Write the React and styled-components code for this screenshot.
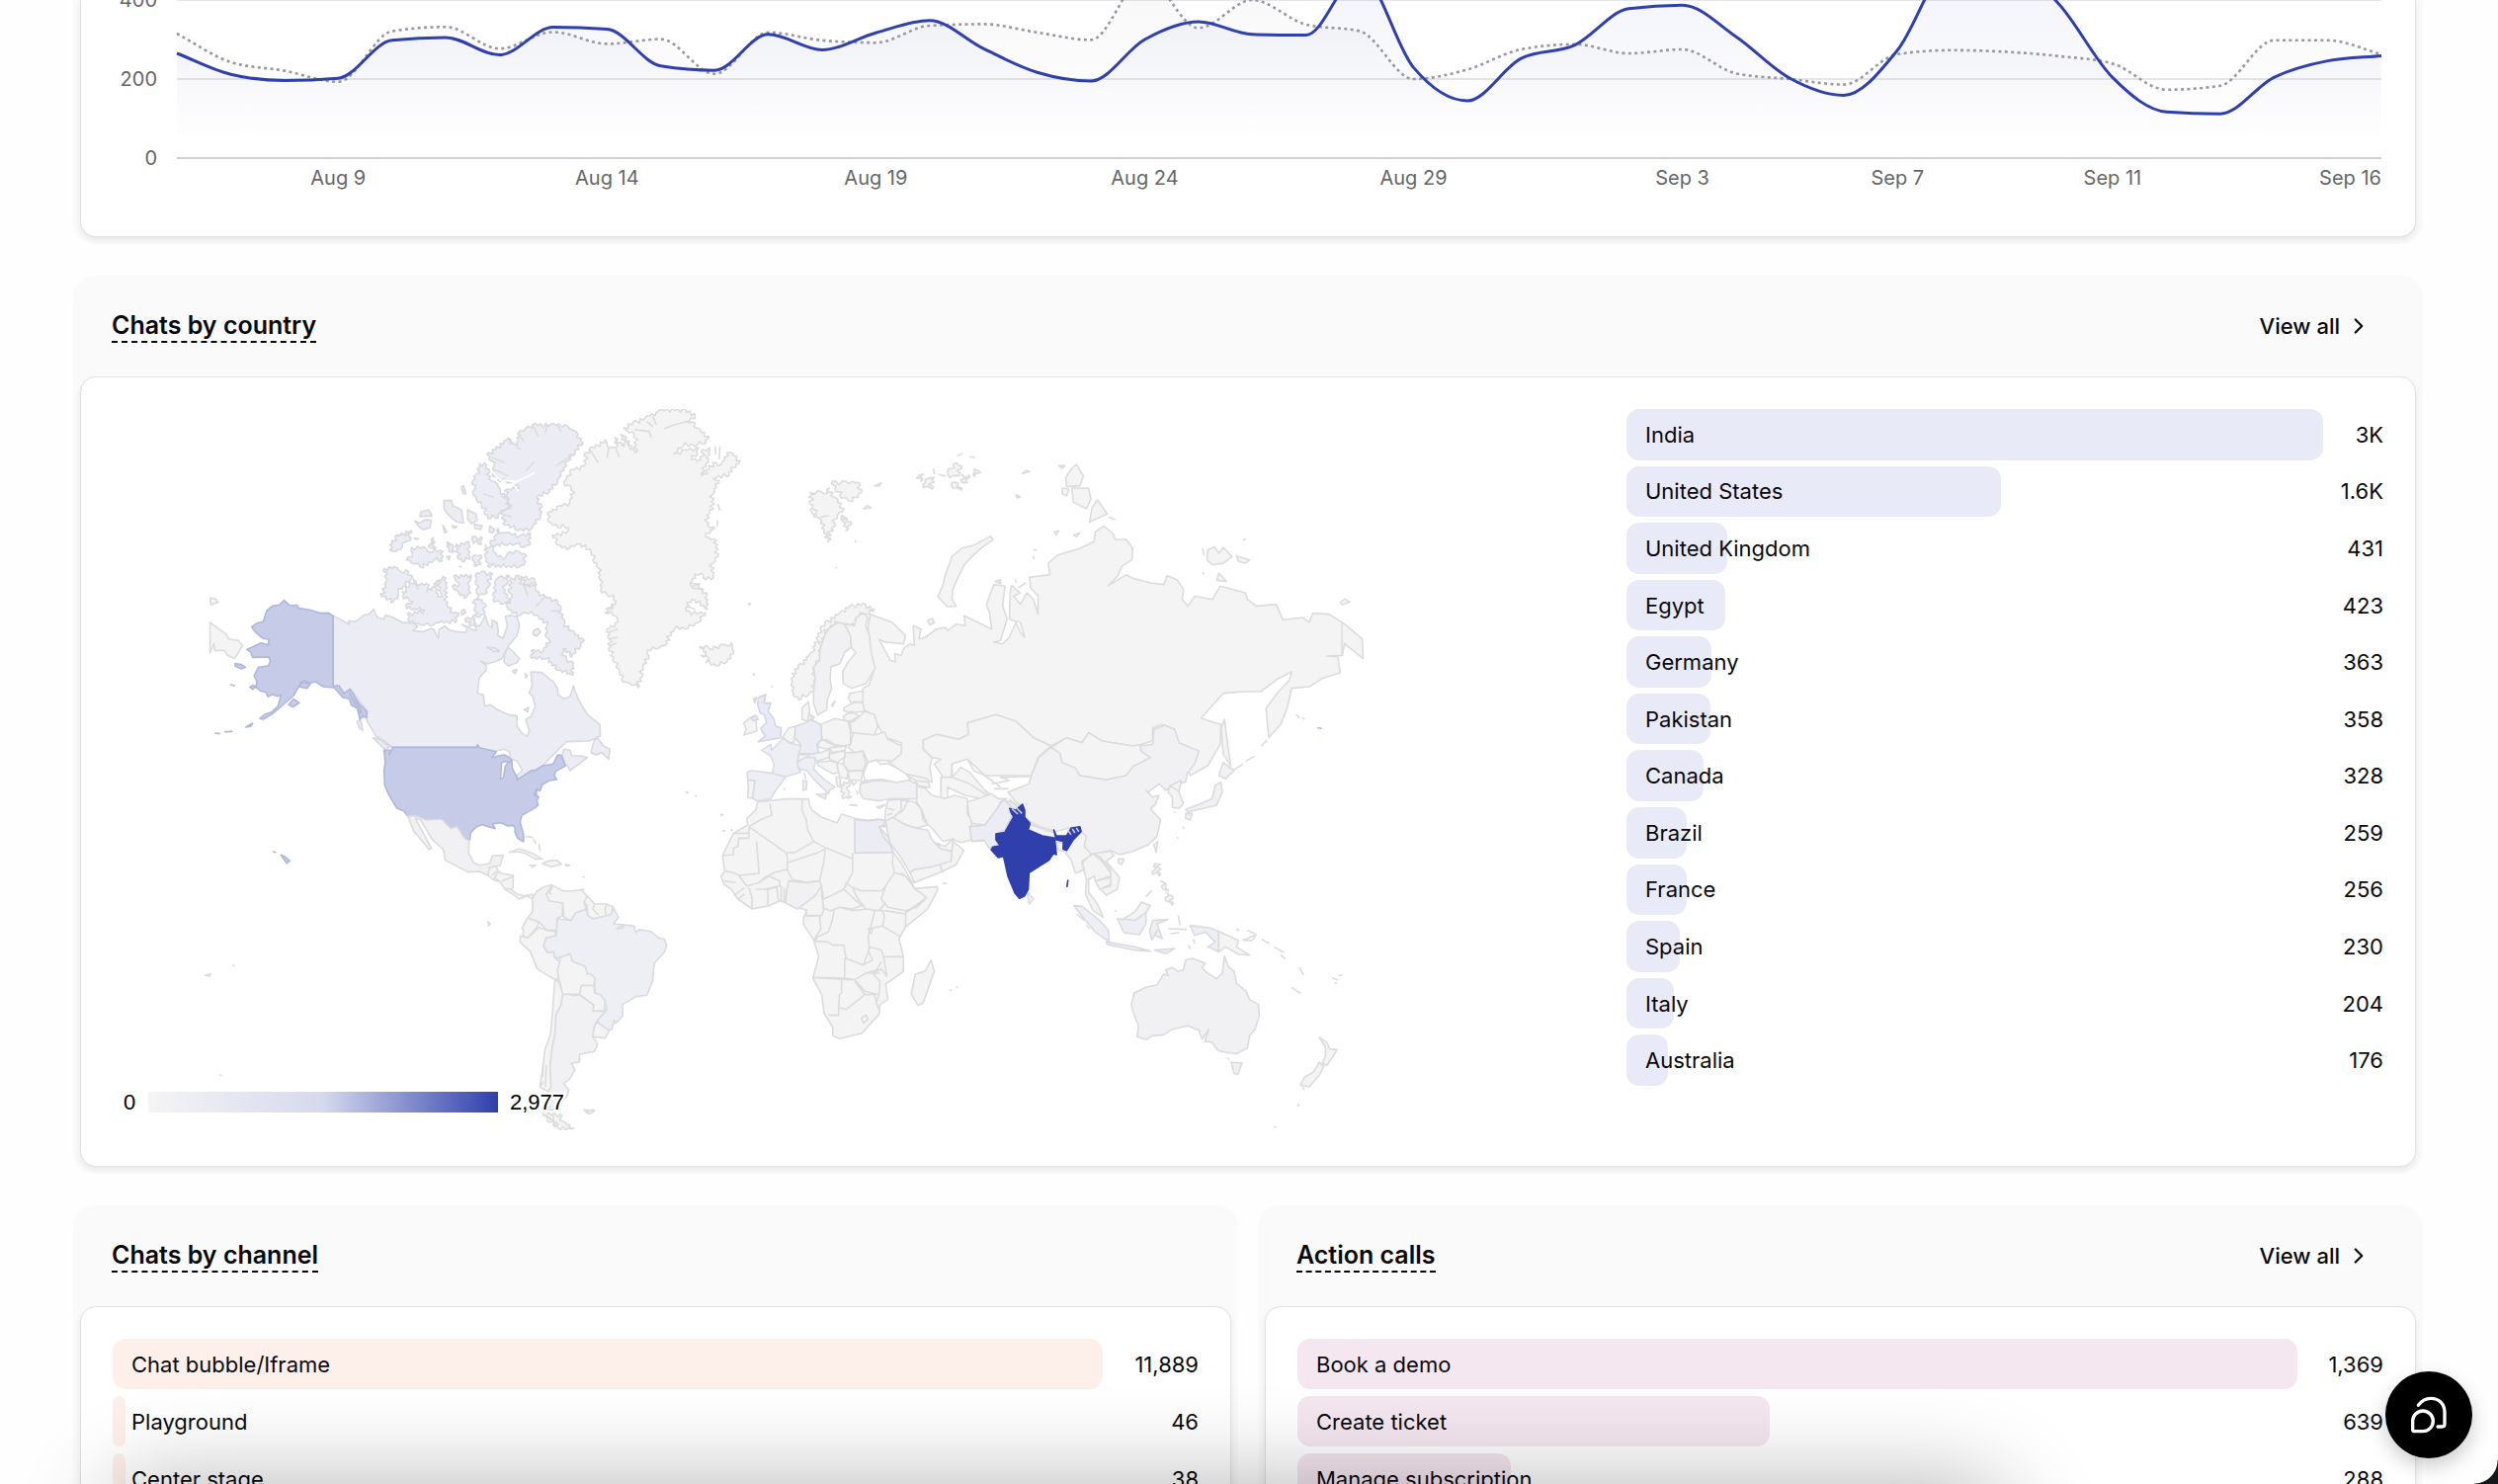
import React from "react";
import styled, { createGlobalStyle } from "styled-components";
import { ChevronRight } from "lucide-react";

const GlobalStyle = createGlobalStyle`
  * {
    box-sizing: border-box;
  }
  body {
    margin: 0;
    background: #fefefe;
    color: #09090b;
    font-family: Inter, "Liberation Sans", sans-serif;
  }
`;

const Page = styled.main`
  display: flex;
  flex-direction: column;
  gap: 32px;
  height: 100vh;
  padding: 0 76px 0 74px;
  overflow: hidden;
`;

const Columns = styled.div`
  display: grid;
  grid-template-columns: 1fr 1fr;
  gap: 20px;
`;

const Panel = styled.section`
  flex: none;
  padding: 0 7px 7px;
  background: #fafafa;
  border-radius: ${(props) => (props.$cut ? "0 0 22px 22px" : "22px")};
`;

const PanelHeader = styled.header`
  display: flex;
  align-items: center;
  justify-content: space-between;
  height: 102px;
  padding: 0 45px 0 32px;
`;

const PanelTitle = styled.h2`
  margin: 0;
  border-bottom: 2px dashed #09090b;
  font-size: 25px;
  font-weight: 600;
  line-height: 32px;
`;

const ViewAll = styled.a`
  display: flex;
  align-items: center;
  gap: 6px;
  color: inherit;
  font-size: 22px;
  font-weight: 500;
  line-height: 32px;
  text-decoration: none;
`;

const Card = styled.div`
  padding: ${(props) => (props.$cut ? "0 32px 31px" : "32px 32px 31px")};
  background: #fff;
  border: 1px solid #e2e2e4;
  border-top-width: ${(props) => (props.$cut ? "0" : "1px")};
  border-radius: ${(props) => (props.$cut ? "0 0 16px 16px" : "16px")};
  box-shadow: 0 3px 6px rgba(0, 0, 0, 0.08);
`;

const CountryGrid = styled.div`
  display: grid;
  grid-template-columns: 2fr 1fr;
`;

const Drawing = styled.svg`
  display: block;
  width: 100%;
  height: auto;
`;

const AxisText = styled.text`
  fill: #666;
  font-family: Inter, "Liberation Sans", sans-serif;
  font-size: 20px;
`;

const LegendText = styled.text`
  fill: #000;
  stroke: #fff;
  stroke-width: 5px;
  paint-order: stroke;
  font-family: "Liberation Sans", Arial, sans-serif;
  font-size: 22px;
`;

const Shape = styled.path`
  fill: ${(props) => props.$fill};
  stroke: ${(props) => props.$stroke};
  stroke-width: 1.6px;
  stroke-linejoin: round;
  vector-effect: non-scaling-stroke;
`;

const List = styled.ul`
  display: grid;
  grid-auto-rows: minmax(51px, 1fr);
  gap: ${(props) => (props.$tall ? "6px" : "7px")};
  height: ${(props) => (props.$tall ? "685px" : "auto")};
  margin: 0;
  padding: 0;
  list-style: none;
  font-size: 22px;
  font-weight: 400;
`;

const Row = styled.li`
  display: grid;
  grid-template-columns: minmax(0, 1fr) ${(props) => props.$valueWidth}px;
  align-items: center;
`;

const Track = styled.div`
  display: grid;
  align-items: center;
  height: 100%;
  > * {
    grid-area: 1 / 1;
  }
`;

const Bar = styled.div`
  height: 100%;
  min-width: 13px;
  border-radius: 13px;
  background: ${(props) => props.$color};
`;

const Label = styled.span`
  padding-left: 19px;
  white-space: nowrap;
`;

const Value = styled.span`
  text-align: right;
`;

const ChatButton = styled.button`
  position: fixed;
  right: 26px;
  bottom: 26px;
  width: 88px;
  height: 88px;
  padding: 0;
  border: 0;
  border-radius: 50%;
  background: #000;
  box-shadow: 0 8px 20px rgba(0, 0, 0, 0.2);
  cursor: pointer;
`;

const DockShadow = styled.div`
  position: fixed;
  top: 100%;
  left: 114px;
  right: 500px;
  height: 120px;
  border-radius: 40px;
  box-shadow: 0 0 96px rgba(0, 0, 0, 0.3);
  pointer-events: none;
`;

const Corner = styled.div`
  position: fixed;
  right: 0;
  bottom: 0;
  width: 24px;
  height: 24px;
  background: radial-gradient(circle at 0 0, transparent 23px, #16171a 24px);
  pointer-events: none;
`;

const current = [
  265, 212, 196, 202, 298, 305, 261, 331, 326, 233, 222, 313, 274, 317, 348, 277, 217, 195, 300, 345, 313,
  311, 466, 229, 145, 252, 286, 378, 387, 307, 202, 159, 273, 490, 500, 390, 204, 117, 112, 204, 246, 259,
];
const previous = [
  315, 243, 221, 193, 321, 332, 277, 319, 289, 301, 213, 318, 298, 292, 335, 339, 318, 299, 459, 329, 400,
  338, 321, 200, 224, 275, 288, 265, 275, 214, 200, 186, 263, 273, 269, 258, 239, 173, 183, 298, 298, 263,
];
const ticks = [
  [3, "Aug 9"],
  [8, "Aug 14"],
  [13, "Aug 19"],
  [18, "Aug 24"],
  [23, "Aug 29"],
  [28, "Sep 3"],
  [32, "Sep 7"],
  [36, "Sep 11"],
  [41, "Sep 16"],
];

const LEFT = 66;
const RIGHT = 2297;
const STEP = (RIGHT - LEFT) / 41;
const px = (i) => LEFT + i * STEP;
const py = (v) => 160 - v * 0.4;

// monotone cubic through the daily values
function curve(values) {
  const y = values.map(py);
  const slopes = y.slice(1).map((v, i) => (v - y[i]) / STEP);
  const tangents = y.map((_, i) => {
    if (i === 0) return slopes[0];
    if (i === y.length - 1) return slopes[i - 1];
    const a = slopes[i - 1];
    const b = slopes[i];
    if (a * b <= 0) return 0;
    return Math.sign(a) * Math.min(Math.abs(a), Math.abs(b), Math.abs(a + b) / 4) * 2;
  });
  let d = `M${px(0)} ${y[0]}`;
  for (let i = 1; i < y.length; i++) {
    const third = STEP / 3;
    d += `C${px(i - 1) + third} ${y[i - 1] + tangents[i - 1] * third} ${px(i) - third} ${y[i] - tangents[i] * third} ${px(i)} ${y[i]}`;
  }
  return d;
}

const closeArea = (d) => `${d}L${RIGHT} 160L${LEFT} 160Z`;

const countries = [
  ["India", "3K", 2977],
  ["United States", "1.6K", 1601],
  ["United Kingdom", "431", 431],
  ["Egypt", "423", 423],
  ["Germany", "363", 363],
  ["Pakistan", "358", 358],
  ["Canada", "328", 328],
  ["Brazil", "259", 259],
  ["France", "256", 256],
  ["Spain", "230", 230],
  ["Italy", "204", 204],
  ["Australia", "176", 176],
];
const channels = [
  ["Chat bubble/Iframe", "11,889", 11889],
  ["Playground", "46", 46],
  ["Center stage", "38", 38],
];
const actions = [
  ["Book a demo", "1,369", 1369],
  ["Create ticket", "639", 647],
  ["Manage subscription", "288", 292],
];

const TONES = {
  land: ["#f4f4f4", "#dcdcdc"],
  rough: ["#f4f4f4", "#dcdcdc"],
  line: ["none", "#dcdcdc"],
  water: ["#fff", "#dcdcdc"],
  gap: ["none", "#fff"],
  us: ["#c6cbe8", "#b1b7db"],
  canada: ["#ecedf4", "#d8d8de"],
  arctic: ["#ecedf4", "#d8d8de"],
  uk: ["#e9eaf5", "#d4d6e4"],
  mid: ["#ebecf4", "#d6d8e0"],
  soft: ["#eeeff4", "#dadbe0"],
  faint: ["#f1f1f4", "#dadbdd"],
  india: ["#2f3fac", "#2f3fac"],
  hatch: ["none", "#c9cce4"],
};

// Each sheet of the map has its own scale and origin.
const SHEETS = [
  {
    at: "matrix(.35714 0 0 .33333 87 -13)",
    shapes: [
      ["canada", "M384 670 430 695 428 685 445 688 456 682 470 668 485 665 494 655 499 650 504 665 510 675 528 680 532 668 550 673 580 690 612 692 624 702 610 715 640 718 662 708 670 712 682 738 684 712 700 700 712 712 730 718 760 720 764 706 748 696 770 705 778 712 790 715 786 700 800 700 815 668 825 700 835 706 834 682 848 690 852 716 850 730 866 738 878 700 872 672 886 668 905 672 912 700 905 730 882 760 862 800 840 810 822 815 802 808 818 820 818 835 798 858 793 905 810 910 814 945 830 940 850 955 880 970 905 973 905 1005 920 1028 934 1036 940 1020 930 985 945 975 957 945 950 915 940 905 948 880 944 840 975 842 995 860 1008 870 1020 890 1022 910 1040 922 1055 915 1065 882 1072 905 1080 925 1090 945 1105 970 1122 985 1140 1000 1141 1035 1110 1050 1045 1052 975 1127 945 1142 910 1165 900 1160 920 1140 905 1110 885 1105 885 1085 870 1075 845 1080 838 1080 795 1072 791 1062 790 1069 551 1069 530 1050 505 1035 495 1015 480 990 480 960 446 910 432 892 415 906 400 882 384 884Z M1038 1075 1055 1078 1060 1095 1085 1095 1105 1100 1080 1120 1055 1140 1048 1125 1042 1122 1033 1092Z M1130 1038 1120 1060 1115 1085 1130 1092 1145 1085 1165 1105 1168 1075 1150 1065 1140 1050Z M497 1040 515 1045 545 1068 530 1075Z M452 990 462 988 468 1018 458 1010Z"],
      ["arctic", "M528 526 557 520 572 533 590 530 610 555 568 598 566 618 548 629 518 604 535 566"],
      ["arctic", "M580 597 612 560 620 572 655 575 662 592 670 572 678 568 680 612 690 600 676 565 690 562 696 550 704 556 706 635 728 660 740 662 730 690 700 692 690 685 660 700 640 698 600 690 594 664 642 652 592 648 590 638 610 626 584 618 M726 548 775 545 772 565 768 590 773 600 755 617 740 600 728 590 722 580 742 572 730 560 M790 540 806 535 836 542 826 580 820 600 795 608 790 590 788 565 M796 610 818 640 815 660 800 675 782 668 786 645 780 630 M758 680 780 672 790 695 770 700"],
      ["arctic", "M850 555 862 548 884 550 875 575 868 600 878 605 886 625 860 634 840 628 838 600 842 570 M888 555 910 548 925 575 958 580 960 595 985 610 1020 625 1030 650 1040 690 1060 715 1095 745 1085 762 1060 795 1035 770 1045 800 1065 815 1062 850 1020 835 985 800 945 798 945 775 980 775 995 740 985 725 990 700 960 668 930 660 905 670 880 650 875 630 890 615 880 590 M916 550 955 558 960 575 925 580"],
      ["canada", "M870 785 880 765 895 780 912 800 905 812 880 822 868 810Z M892 838 905 832 900 845Z M928 845 934 852 930 858Z M952 715 965 708 972 720 960 732 950 725Z M925 955 938 948 936 962Z M820 765 845 768 855 778 840 778Z M748 655 755 650 760 660 748 668Z"],
      ["arctic", "M815 455 838 462 845 480 850 490 875 488 885 475 910 474 932 488 925 515 912 522 822 520 815 490 M828 448 845 425 852 405 868 418 885 418 915 425 944 420 940 455 925 462 900 452 870 455 835 458 M733 452 770 446 770 498 750 506 735 490 M708 445 725 460 728 475 712 475 M706 490 716 488 712 500 M780 488 803 485 803 512 785 515 778 500 M778 430 804 430 805 452 782 450"],
      ["arctic", "M606 462 640 460 652 475 665 478 655 455 668 432 673 470 695 475 693 503 668 502 640 524 615 512 592 500 608 480 M545 455 565 425 605 410 603 440 590 445 580 462 562 475 545 470"],
      ["canada", "M632 355 655 348 664 367 630 368Z M615 382 628 388 645 378 662 380 658 402 640 408 628 400Z M698 320 720 320 722 335 748 348 753 388 735 385 722 375 708 360 698 345Z M765 348 788 360 792 380 776 390 765 375Z M748 278 754 275 760 300 752 298Z M695 395 706 415 700 418Z M784 392 806 396 802 408 786 405Z M828 398 842 408 836 418 826 415Z M614 434 626 436 618 438Z M722 396 735 400 726 404Z M742 520 746 522Z M784 518 790 520Z"],
      ["arctic", "M798 208 812 205 825 225 832 260 850 270 858 290 878 310 884 335 870 350 858 355 852 372 822 374 812 355 805 335 790 318 780 300 785 285 778 262 790 240 M820 180 880 130 895 148 905 150 908 115 930 100 950 88 1000 88 1040 90 1062 105 1078 118 1092 145 1070 175 1050 200 1025 250 1020 265 990 300 960 310 975 330 972 370 950 400 938 412 900 408 865 390 860 350 885 345 880 320 870 290 895 280 910 285 885 265 858 262 835 240 840 215 832 200"],
      ["gap", "M832 228 858 258 905 262 955 236 M905 262 892 268 910 292 M862 262 870 285"],
      ["line", "M878 130 915 165 M905 115 925 140 M950 90 965 125 M990 90 985 115 M1020 92 1030 112 M1015 215 1065 180 M835 190 870 205 M930 230 955 200 M840 225 880 245 M880 320 860 305 M862 360 890 370 M810 300 840 310 M925 575 935 610 M985 612 960 640 M1030 655 1000 655 M612 560 625 590 M655 575 650 600"],
      ["rough", "M1098 175 1110 163 1155 136 1165 160 1185 160 1182 128 1210 155 1198 120 1215 128 1240 175 1238 120 1215 108 1208 98 1235 80 1268 68 1300 52 1315 44 1375 42 1408 55 1408 72 1385 80 1410 85 1415 100 1448 125 1440 145 1415 152 1375 155 1350 180 1380 165 1420 160 1416 180 1400 195 1425 195 1430 165 1450 160 1448 195 1428 245 1460 205 1485 210 1500 175 1516 176 1537 200 1500 248 1460 252 1478 260 1460 300 1462 345 1450 350 1445 395 1465 400 1440 430 1470 440 1475 490 1460 510 1462 555 1440 560 1425 540 1395 570 1420 580 1442 600 1445 650 1400 620 1385 655 1440 662 1420 690 1390 708 1350 710 1330 755 1300 770 1275 775 1278 800 1262 825 1260 855 1248 888 1225 875 1205 870 1195 840 1180 810 1165 770 1165 740 1160 710 1190 690 1185 670 1155 660 1185 625 1160 605 1145 600 1140 560 1135 525 1120 500 1115 475 1075 452 1045 468 1020 455 1005 425 1050 412 1050 402 1020 402 995 385 990 360 1025 335 1055 325 1060 280 1040 275 1040 260 1060 225 1095 215"],
      ["line", "M1110 163 1135 206 M1165 160 1160 190 M1185 160 1195 188 M1210 130 1228 168 M1238 105 1280 110 1285 128 M1385 80 1350 90 1322 102 M1290 95 1272 80 M1300 90 1290 65 M1466 155 1468 180 M1480 155 1478 195 M1474 330 1480 350 M1474 380 1472 398 M1395 570 1425 575 M1400 585 1435 590 M1385 640 1410 650 M1155 650 1180 640 M1165 720 1190 710 M1165 740 1190 735 M1170 760 1188 752"],
      ["rough", "M1422 765 1440 760 1450 770 1480 758 1500 760 1512 752 1519 785 1500 810 1470 822 1440 812 1450 800 1425 790 1440 780"],
      ["land", "M35 690 80 725 88 740 115 745 127 760 105 800 85 790 75 775 48 775 46 755 35 782Z M35 616 50 618 58 628 38 637Z"],
      ["us", "M384 670 371 661 350 662 318 652 287 647 281 637 268 639 259 637 245 623 231 637 214 639 196 654 186 687 168 692 153 704 163 718 184 738 202 742 200 758 180 752 140 772 150 780 156 796 202 795 206 808 200 822 172 826 160 852 168 870 165 886 178 898 194 902 199 916 212 908 225 914 236 910 228 944 210 962 192 968 176 982 186 984 214 966 240 942 272 912 286 886 300 866 318 874 334 870 356 885 384 888Z M136 1008 156 996 150 1006Z M50 1026 62 1028Z M78 1022 98 1021Z M106 815 124 818 136 826 124 831 106 822Z M148 886 158 880 164 886 156 893Z M258 940 272 922 288 934 270 947Z M94 879 104 882Z M384 884 400 882 415 906 432 892 446 918 460 940 480 960 478 980 468 974 460 985 452 950 436 942 430 922 412 918Z M292 872 320 876 310 890 290 886Z M430 905 445 935 460 968 M440 905 465 965"],
    ],
  },
  {
    at: "matrix(.38265 0 0 .33333 87 367)",
    shapes: [
      ["us", "M514 -71 738 -71 741 -78 745 -70 781 -60 790 -57 778 -40 800 -46 812 -48 830 -35 829 -26 812 -28 804 -24 801 25 809 22 813 -12 819 -22 831 -30 833 -5 845 20 845 28 868 10 882 0 896 -2 910 -14 940 -20 952 -48 961 -47 973 -15 947 2 943 15 950 27 930 30 912 42 905 62 896 55 892 75 902 80 897 92 901 104 893 112 857 136 853 156 862 195 862 216 846 205 839 185 840 175 835 166 820 168 802 158 780 162 787 176 752 164 738 170 722 188 720 210 706 206 685 168 670 176 645 147 605 150 578 137 556 138 545 122 527 114 513 88 505 72 495 45 493 0 496 -25 493 -62 512 -62 516 -66Z M220 256 232 262 244 274 236 281Z M200 246 206 248Z"],
      ["us", "M898 58 890 72 900 78 M512 -62 506 -48"],
      ["faint", "M556 138 578 137 605 150 645 147 670 176 685 168 706 206 718 212 717 250 730 280 745 287 772 282 780 258 808 257 800 288 790 290 772 294 775 306 768 318 745 306 715 308 655 272 650 240 620 208 590 150 576 145 590 175 618 235 612 240 588 205 572 185Z"],
      ["land", "M768 318 772 294 790 290 795 306 805 312 835 318 834 355 830 362 845 375 865 380 885 375 888 390 870 380 850 390 835 376 815 362 800 338 780 330Z M824 248 850 237 880 248 912 268 892 268 865 250 840 246Z M912 282 925 275 950 272 962 284 935 292Z M878 287 894 288 886 292Z M972 285 984 287 976 290Z"],
      ["line", "M795 306 785 325 800 338 M805 335 834 322 M815 358 832 360 M790 306 778 318 M868 200 887 203 M888 208 895 222 M902 222 906 244 M1012 362 1022 360 M1018 322 1024 324 M768 458 774 466 770 472Z M20 622 34 617 32 624Z M92 590 98 594 M58 923 64 926 M1290 64 1298 68 M1315 75 1320 77 M1383 133 1390 134 M1388 183 1394 184 M1410 180 1414 182"],
      ["faint", "M885 390 898 365 912 355 938 346 922 375 930 395 966 402 965 440 950 450 950 485 925 485 903 460 872 448 885 430 886 405Z"],
      ["land", "M922 375 938 350 945 352 965 365 985 366 1015 362 1030 380 1022 400 1028 420 1000 432 988 455 968 445 966 402 930 395Z M1030 380 1050 405 1082 405 1100 415 1092 438 1045 450 1032 440 1030 410 1022 400Z M868 455 872 448 903 460 895 480 872 508 860 500 862 482 858 480Z M853 502 872 508 903 475 925 485 948 488 945 502 922 508 915 532 925 552 942 550 945 568 958 580 952 605 955 630 945 635 898 602 880 550 853 520Z"],
      ["line", "M1050 405 1045 420 1060 438 M1082 405 1078 420 1080 438 M938 355 930 370 936 376"],
      ["soft", "M1100 418 1113 445 1100 465 1128 468 1108 480 1122 480 1130 468 1155 472 1158 492 1168 482 1198 488 1220 508 1235 512 1240 530 1235 550 1208 585 1203 640 1188 682 1160 686 1124 710 1124 745 1105 768 1102 758 1095 785 1085 790 1055 760 1082 725 1078 700 1065 680 1050 675 1050 630 1040 618 1030 618 1025 595 990 578 985 556 958 568 945 568 942 550 925 552 915 532 922 508 948 502 952 450 988 455 1000 432 1028 420 1032 440 1045 450 1092 438Z"],
      ["land", "M958 568 985 556 990 578 1025 595 1030 618 1040 618 1050 630 1048 652 1015 652 1010 678 980 680 966 680 955 630 952 605 958 580Z M1015 652 1048 652 1050 675 1065 680 1078 700 1075 730 1045 730 1048 712 1010 680Z M1055 762 1088 790 1078 812 1045 808 1048 780Z M945 635 955 640 966 680 960 715 948 740 945 800 938 840 932 900 935 960 928 975 905 960 912 910 918 850 933 800 938 740Z"],
      ["faint", "M966 680 980 678 995 684 1010 680 1048 712 1045 730 1078 730 1082 725 1055 762 1048 780 1045 808 1058 830 1050 852 1010 862 1010 885 988 888 998 908 985 935 968 950 982 970 978 985 965 1005 955 1030 930 1030 928 975 935 960 932 900 938 840 945 800 948 740 960 715Z"],
      ["rough", "M912 1040 960 1042 965 1065 995 1085 960 1090 925 1062"],
      ["line", "M914 895 912 930 M922 895 920 960 M905 960 914 945 M925 1050 955 1075 M940 1045 945 1085 M1022 1030 1050 1032 1036 1043Z M1026 1040 1046 1028"],
    ],
  },
  {
    at: "matrix(.44643 0 0 .33333 587 -13)",
    shapes: [
      ["land", "M405 665 455 690 485 730 480 755 440 750 425 742 438 775 450 805 462 810 460 785 475 790 480 770 495 755 505 760 502 700 520 710 515 740 530 735 555 710 575 705 580 715 600 695 620 700 618 670 680 710 675 660 668 635 685 575 710 580 705 640 715 680 700 745 685 750 705 755 720 735 735 690 745 720 755 735 745 690 720 680 722 600 725 578 745 600 730 610 745 635 760 600 775 620 785 665 785 610 768 585 766 553 812 545 808 510 830 485 880 465 912 445 915 415 934 397 955 420 960 438 985 438 1000 465 998 500 975 520 965 550 945 578 985 545 998 555 1040 570 1070 575 1078 548 1100 560 1115 590 1112 620 1125 640 1140 610 1180 620 1198 580 1255 600 1260 620 1280 640 1325 635 1340 682 1385 675 1400 690 1408 662 1445 665 1480 695 1520 740 1522 800 1480 755 1475 790 1440 792 1465 795 1470 842 1430 860 1400 885 1360 890 1350 950 1335 1000 1308 1040 1302 950 1330 900 1355 865 1360 840 1330 860 1290 900 1255 900 1205 905 1155 980 1175 990 1200 1000 1198 1060 1170 1125 1130 1155 1125 1130 1140 1120 1148 1085 1100 1060 1090 1020 1065 1000 1045 1010 1045 1050 1020 1060 1000 1065 930 1050 900 1025 885 1055 850 1040 815 1065 775 1040 735 990 690 970 625 995 628 1030 605 1045 555 1030 525 1048 525 1075 545 1100 540 1130 545 1175 520 1160 480 1150 440 1105 475 1085 475 1055 430 1035 430 1020 405 965 388 955 388 890 402 880 415 830 400 790 400 700Z"],
      ["line", "M1474 692V790 M1228 1138 1250 1120 M1256 1112 1276 1096 M1292 1066 1304 1046 M1370 970 1378 980 M1384 980 1390 984"],
      ["land", "M525 1048 555 1030 605 1045 628 1030 625 995 690 970 735 990 775 1040 815 1065 785 1100 770 1155 700 1155 665 1155 625 1105 590 1120 590 1160 570 1160 550 1120 565 1105 545 1100 525 1075Z M565 1160 590 1160 610 1130 630 1145 665 1200 680 1215 655 1225 620 1215 580 1190 580 1225 565 1225Z M815 1070 850 1040 885 1055 900 1025 930 1050 1000 1065 1020 1060 1018 1080 1040 1100 1000 1130 985 1155 940 1168 880 1155 870 1135 838 1115 835 1090Z M1208 985 1215 1060 1222 1125 1205 1090 1200 1010Z"],
      ["line", "M625 1105 640 1140 665 1155 700 1190 M590 1120 590 1160 M590 1160 630 1180 670 1215 M680 1180 720 1170 700 1160 765 1158 M685 1195 718 1195"],
      ["land", "M678 428 683 440 660 460 635 490 618 515 605 550 592 590 590 620 600 640 580 642 558 612 570 575 575 545 590 490 612 465 640 455Z M872 210 888 245 880 275 850 278 848 250 860 225Z M862 282 900 282 905 315 895 345 865 325Z M920 318 942 360 902 385 908 340Z M840 282 855 285 850 305 840 300Z M1170 470 1185 460 1195 480 1205 462 1225 490 1205 510 1180 515 1168 500Z M1235 488 1265 500 1255 510 1240 505Z M1195 540 1212 565 1190 562Z M1470 630 1480 618 1492 628 1475 636Z M535 685 545 678 550 690 540 698Z M688 565 700 560 700 572Z"],
      ["rough", "M268 295 285 290 300 300 312 282 325 310 345 345 330 365 325 390 308 445 290 375 280 360 268 330 M318 262 350 262 378 265 385 295 365 322 340 312 325 285 M340 365 362 385 350 412 M510 252 525 240 520 262 M530 255 550 250 545 285 525 280 M580 230 600 205 612 215 605 245 585 250 M612 242 630 242 625 265 612 265 M640 225 655 235 640 248 M590 265 605 268 612 288 592 282"],
      ["line", "M602 183 614 178 M630 186 642 190 M548 222 550 240 M560 240 575 246 M415 275 430 266 425 276Z M390 345 398 335 406 342Z M750 238 758 228 766 232Z M832 214 846 214 840 222Z M735 302 745 308 738 312Z M822 415 832 412 826 425Z M866 425 880 418 872 430Z M945 370 960 378 M1158 465 1162 488 M1158 538 1162 544 M1250 440 1256 436 M775 468 782 472 M773 488 777 498 M733 558 736 570 M740 585 758 570 M372 440 370 448 M326 522 328 526 M128 636 133 630 M139 846 142 850 M180 882 184 888 M268 345 280 372 M292 370 312 365"],
      ["us", "M1420 1010 1427 1012Z"],
    ],
  },
  {
    at: "matrix(.44643 0 0 .33333 607 327)",
    shapes: [
      ["land", "M105 215 170 206 220 206 222 222 228 240 250 262 285 278 295 252 325 265 355 272 378 268 392 270 398 290 380 290 400 320 412 368 430 400 455 460 460 478 512 472 512 485 490 540 440 595 425 630 435 685 435 730 395 768 400 815 382 830 380 860 340 918 290 934 275 925 275 900 255 855 250 800 230 750 243 685 232 635 210 590 208 570 215 545 208 540 190 535 180 520 165 520 155 515 130 530 92 540 60 510 45 480 28 465 22 440 30 425 25 378 50 310 82 285 80 265 100 240Z M498 695 505 730 480 825 468 833 453 798 462 738 485 728Z"],
      ["line", "M132 220 137 255 110 270 85 290 M50 310 85 310 M85 290 85 325 62 325 60 350 50 355 50 375 25 378 M85 290 170 370 172 385 M102 335 108 432 62 438 50 430 30 425 M170 370 190 368 232 335 218 300 215 270 205 240 206 206 M172 385 172 420 145 428 120 445 108 460 80 470 62 438 M232 335 260 355 320 388 M172 400 240 370 258 358 255 395 245 455 215 460 182 450 172 420 M320 370 320 430 300 480 270 500 255 510 250 480 245 455 M412 370 410 400 415 430 395 470 385 485 340 485 320 475 303 460 M415 430 440 440 462 480 488 505 465 535 440 545 400 535 385 510 395 470 M430 430 458 462 M488 505 440 552 440 595 M250 470 250 500 255 540 250 560 215 560 215 540 M255 510 270 500 300 480 340 530 320 540 290 535 270 545 250 535 M303 460 320 475 330 505 350 540 380 545 395 520 M290 535 320 545 355 540 370 545 362 590 355 625 358 660 350 690 345 710 305 690 300 650 275 650 265 640 235 638 240 625 265 610 275 570 278 540 M215 562 245 560 248 600 232 635 M370 545 388 545 392 565 388 592 365 598 M392 545 440 555 M388 592 430 625 M358 655 385 665 390 685 435 685 M302 690 302 750 232 748 M345 710 365 695 355 665 M385 700 375 725 350 735 325 755 302 750 M390 685 398 745 385 722 365 735 382 760 380 800 375 820 M325 755 348 790 380 800 M350 735 382 735 M232 748 320 755 M295 755 295 795 290 800 288 862 265 862 M290 840 305 845 348 800 325 760 M350 800 370 800 375 830 380 845 M340 872 350 862 355 875 345 886Z M128 480 148 475 152 515 M158 470 158 520 M165 475 165 520 M100 480 128 480 128 530 M85 475 92 505 92 540 M50 500 75 475 M60 510 75 495 M28 455 55 460 M108 460 130 440 155 455 155 470 120 480 M355 600 365 600 362 615Z M524 461 534 463 M540 784 544 788 M555 775 558 780 M20 254 26 256 M26 302 32 304 M44 298 48 302"],
      ["mid", "M325 268 355 272 378 268 392 270 395 285 380 290 390 320 405 345 412 368 325 370Z"],
      ["faint", "M175 455 215 460 245 455 250 470 235 500 210 525 195 540 168 522 170 490Z"],
      ["land", "M450 430 460 420 500 412 525 398 543 395 545 365 548 335 572 362 555 405 525 425 460 460Z M510 340 530 350 548 325 545 365 520 358Z M430 210 460 215 475 235 490 285 465 295 440 285 412 262 430 240Z M400 210 447 205 435 240 412 262 395 272 392 290 395 240Z M465 165 485 175 500 195 530 205 550 195 580 205 580 250 590 275 590 330 565 338 545 328 525 335 500 295 480 270 475 235 465 215Z M580 215 605 205 635 190 650 205 670 205 655 215 645 250 620 285 590 280 583 250Z M440 130 490 145 495 170 470 170 462 150Z"],
      ["line", "M515 398 525 430 M400 235 415 240 M398 255 410 250 M462 150 490 155 M470 165 490 172"],
      ["faint", "M395 272 412 262 440 285 465 295 490 300 500 330 520 358 545 365 543 395 500 412 460 420 450 430 430 385 405 340 398 300Z M338 160 370 150 410 152 440 145 465 160 465 205 400 206 380 212 345 205 335 185Z"],
      ["faint", "M672 185 720 160 725 135 742 80 770 48 790 68 795 95 825 112 835 135 895 148 940 135 955 108 995 80 975 62 972 45 1000 40 1003 -5 1028 -18 1050 -5 1060 35 1105 60 1095 100 1078 130 1075 155 1050 160 1030 180 1015 160 990 185 985 180 1000 200 1015 195 1005 225 995 235 1018 270 1010 320 990 345 955 365 925 375 905 362 880 370 860 375 845 350 838 300 820 290 780 305 735 285 710 262 705 230 690 215Z M1160 95 1185 120 1165 145 1150 135Z M1155 155 1158 185 1145 225 1115 235 1080 245 1075 238 1110 220 1135 205 1142 165Z M1075 250 1090 250 1085 270 1075 265Z"],
      ["mid", "M590 335 585 290 620 285 645 240 660 210 680 215 700 230 680 260 665 300 645 312 650 345 630 355 618 332Z"],
      ["line", "M665 210 690 245 M675 205 700 240 M712 220 716 224"],
      ["land", "M1040 165 1065 150 1060 185 1070 220 1060 235 1045 232 1045 200 1035 185Z M720 282 760 302 778 308 778 322 750 318 718 298Z M782 338 798 340 800 365 785 360Z M716 488 730 510 720 525Z M838 305 850 320 845 350 862 375 840 395 845 420 825 432 815 390 803 370 820 330Z M862 372 880 380 905 420 905 440 870 455 868 440 855 450 855 490 875 525 888 565 865 545 848 495 850 450 840 400Z M865 372 905 365 912 378 895 395 925 445 920 480 895 498 882 480 905 465 905 430 885 395Z M870 455 905 445 905 470 880 480Z M922 388 935 388 930 405 922 400Z M1003 345 1012 335 1008 368Z"],
      ["rough", "M1005 402 1018 405 1015 440 1000 435 M1030 490 1045 500 1045 528 1030 515 M1018 455 1030 465 1036 485 1024 480"],
      ["line", "M985 502 998 484 M1040 165 1058 182 M1048 245 1052 248 M1055 322 1058 326 M1068 290 1072 296 M914 545 918 548 M828 555 845 575 M850 590 858 600 M1058 560 1062 590 M1035 600 1078 602 M1040 615 1060 612 M1092 632 1096 645 M1082 650 1086 662 M1205 635 1235 618 1225 636Z M1215 605 1232 615 M1190 600 1196 606 M1247 632 1265 645 M1275 655 1298 672 M1290 680 1302 692 M1315 778 1336 797 M1333 718 1342 740 M1408 750 1420 755 M1422 740 1430 742 M1412 764 1418 766 M1328 1140 1332 1132 M1275 1200 1280 1203 M1340 1080 1344 1090 M1170 992 1174 998"],
      ["soft", "M822 530 840 532 880 575 900 605 902 640 870 610 845 570Z M895 640 960 655 995 668 960 665 898 648Z M920 570 935 572 960 550 975 520 995 530 985 550 985 585 970 618 935 612Z M1000 575 1035 572 1010 585 1022 630 1005 620 1010 605 998 635 993 605Z M1005 665 1050 660 1030 676Z M1085 590 1130 598 1150 608 1150 670 1125 655 1142 640 1120 610 1095 620Z"],
      ["land", "M1150 608 1195 635 1190 655 1220 680 1195 678 1165 655 1150 670Z M935 570 960 548 975 520 995 530 985 550 960 575Z"],
      ["faint", "M1163 683 1172 715 1185 730 1190 765 1212 790 1220 815 1240 830 1242 865 1232 905 1220 925 1215 962 1190 980 1165 975 1148 970 1135 945 1118 942 1128 905 1112 935 1105 908 1080 895 1045 905 1025 922 1000 925 985 937 965 928 968 895 955 850 952 830 958 795 985 778 1010 770 1025 738 1035 742 1030 725 1045 718 1058 730 1070 725 1075 695 1090 690 1120 705 1112 718 1120 730 1145 752 1158 735Z M1178 1005 1203 1008 1193 1042 1185 1040Z"],
      ["land", "M1378 930 1395 945 1402 965 1418 968 1408 990 1395 1015 1385 1008 1392 985 1392 960Z M1378 1005 1388 1018 1378 1045 1355 1080 1335 1075 1345 1050 1365 1035Z"],
      ["india", "M676 235 690 240 705 222 710 240 710 262 722 280 718 300 750 318 778 325 782 375 775 372 765 392 720 430 718 480 710 500 698 508 688 492 672 440 662 380 650 384 634 360 638 352 655 348 645 330 645 312 665 308 685 260 680 250Z M776 300 782 318 805 318 815 295 835 290 838 305 820 330 805 362 797 358 798 335 782 330Z M808 453 806 472Z"],
      ["hatch", "M681 236 695 252 M692 234 704 250 M808 301 815 314 M818 297 824 309 M827 294 833 305"],
    ],
  },
  {
    at: "matrix(.33333 0 0 .33333 627 187)",
    shapes: [
      ["rough", "M185 245 210 215 245 180 270 110 285 90 330 60 360 40 400 32 435 50 420 65 400 62 380 75 375 100 345 95 325 90 300 105 285 125 270 170 268 205 250 225 255 260 250 300 235 310 205 325 188 310 183 275"],
      ["faint", "M345 95 362 130 365 165 345 180 330 215 303 225 300 260 305 290 292 325 290 355 262 372 250 335 250 300 255 260 250 225 268 205 270 170 285 125 300 105 325 90Z M345 485 375 485 400 480 408 520 400 540 355 540 340 520Z"],
      ["land", "M375 100 380 75 400 62 415 75 408 100 420 130 425 180 437 230 410 275 365 290 340 275 338 240 355 210 378 182 365 165 362 130 345 95Z M215 350 235 330 238 360 232 390 215 385Z M240 370 252 378 245 388Z M360 305 400 298 400 330 365 335 355 320Z M342 350 375 330 400 335 405 360 360 365 342 358Z M340 375 365 360 390 375 370 392 345 388Z M360 390 390 375 405 360 435 370 445 405 435 432 365 425Z M272 400 315 382 355 390 362 420 362 460 340 465 305 460 275 445Z M362 460 370 425 435 432 465 422 475 445 518 465 515 490 490 510 440 508 415 515 400 480 375 485 355 470Z M155 440 175 410 195 405 193 440 190 455 175 455Z M50 568 72 570 65 625 50 622 52 595Z M38 395 58 380 75 385 78 420 38 432 45 415Z M205 490 235 492 225 505 202 510Z M235 490 270 485 300 475 295 500 265 510 235 500Z M262 450 290 445 320 465 290 475 265 468Z M300 470 350 465 345 480 305 485Z M298 490 345 478 345 500 320 515 298 505Z M355 542 400 540 395 570 358 568Z M260 515 300 510 320 515 325 545 310 550 265 525Z M320 515 340 520 355 545 352 565 330 560 325 540Z M318 560 330 560 332 590 322 588Z"],
      ["rough", "M330 580 358 572 380 575 350 590 365 620 340 625"],
      ["line", "M358 643 385 646 M442 650 468 643 450 655Z M305 340 315 328 308 346Z M392 575 412 572 M158 595 164 598 M380 600 384 612 M52 38 60 32 M66 245 72 250"],
      ["mid", "M195 405 225 395 240 385 272 400 275 445 260 460 265 485 245 490 205 488 210 460 193 440Z"],
      ["uk", "M82 318 105 308 100 335 120 335 112 360 130 385 135 405 152 410 150 440 82 452 105 435 95 425 90 410 108 395 100 370 88 365 80 340Z M60 378 75 372 82 385 65 388Z M68 322 76 318 72 334Z"],
      ["soft", "M92 478 120 460 122 478 150 450 158 440 175 455 212 465 205 490 200 520 210 545 165 558 125 548 130 520 120 495Z M48 545 60 540 125 548 165 560 135 600 120 625 80 632 65 625 72 570 50 568Z M200 515 225 500 255 500 255 520 250 535 280 565 315 590 300 598 295 610 280 595 250 565 230 540 205 535Z M258 612 290 610 285 626Z M218 570 230 572 228 598 218 600Z M222 548 226 565Z"],
      ["water", "M415 515 440 508 455 520 475 518 500 530 530 550 545 568 500 576 460 566 405 570 402 548Z"],
    ],
  },
];

// breaks every edge into short uneven teeth, for fjord coasts
function fray(d) {
  let n = 0;
  return d
    .split("M")
    .filter(Boolean)
    .map((part) => {
      const nums = part.trim().split(/\s+/).map(Number);
      const out = [];
      for (let i = 0; i < nums.length; i += 2) {
        const x = nums[i];
        const y = nums[i + 1];
        const dx = nums[(i + 2) % nums.length] - x;
        const dy = nums[(i + 3) % nums.length] - y;
        const len = Math.hypot(dx, dy);
        out.push(x, y);
        const teeth = Math.floor(len / 7);
        for (let t = 1; t < teeth; t++) {
          n += 1;
          const size = n % 2 ? 2 + ((n * 7) % 9) : -2;
          out.push(Math.round(x + (dx * t) / teeth - (dy / len) * size));
          out.push(Math.round(y + (dy * t) / teeth + (dx / len) * size));
        }
      }
      return `M${out.join(" ")}Z`;
    })
    .join("");
}

function TrendChart() {
  const now = curve(current);
  const before = curve(previous);
  return (
    <Drawing viewBox="1 0 2298 208" role="img" aria-label="Chats per day">
      <defs>
        <linearGradient id="now" gradientUnits="userSpaceOnUse" x1="0" y1="-200" x2="0" y2="148">
          <stop offset="0" stopColor="#2f3fac" stopOpacity="0.12" />
          <stop offset="1" stopColor="#2f3fac" stopOpacity="0" />
        </linearGradient>
        <linearGradient id="before" gradientUnits="userSpaceOnUse" x1="0" y1="-200" x2="0" y2="148">
          <stop offset="0" stopColor="#000" stopOpacity="0.06" />
          <stop offset="1" stopColor="#000" stopOpacity="0" />
        </linearGradient>
      </defs>
      <path d={`M${LEFT} 0H${RIGHT}M${LEFT} 80H${RIGHT}`} stroke="#e6e6ea" strokeWidth="2" />
      <path d={closeArea(before)} fill="url(#before)" />
      <path d={closeArea(now)} fill="url(#now)" />
      <path d={before} fill="none" stroke="#9898a2" strokeWidth="2.6" strokeDasharray="3 3.4" />
      <path d={now} fill="none" stroke="#2f3fac" strokeWidth="3" />
      <path d={`M${LEFT} 160H${RIGHT}`} stroke="#d0d0d3" strokeWidth="2" />
      {[400, 200, 0].map((v) => (
        <AxisText key={v} x="46" y={py(v) + 7} textAnchor="end">
          {v}
        </AxisText>
      ))}
      {ticks.map(([i, label]) => (
        <AxisText key={label} x={px(i)} y="187" textAnchor={i === 41 ? "end" : "middle"}>
          {label}
        </AxisText>
      ))}
    </Drawing>
  );
}

function WorldMap() {
  return (
    <Drawing viewBox="1 1 1532 735" role="img" aria-label="Chats by country on a world map">
      <defs>
        <linearGradient id="scale">
          <stop offset="0" stopColor="#f5f5f5" />
          <stop offset="0.5" stopColor="#d5d9ed" />
          <stop offset="1" stopColor="#2f3fac" />
        </linearGradient>
      </defs>
      {SHEETS.map((sheet) => (
        <g key={sheet.at} transform={sheet.at}>
          {sheet.shapes.map(([tone, d], i) => (
            <Shape
              key={i}
              d={tone === "rough" || tone === "arctic" ? fray(d) : d}
              $fill={TONES[tone][0]}
              $stroke={TONES[tone][1]}
            />
          ))}
        </g>
      ))}
      <rect x="37" y="692" width="354" height="21" fill="url(#scale)" />
      <LegendText x="12" y="710">
        0
      </LegendText>
      <LegendText x="403" y="710">
        2,977
      </LegendText>
    </Drawing>
  );
}

function BarList({ rows, color, valueWidth, tall }) {
  const max = rows[0][2];
  return (
    <List $tall={tall}>
      {rows.map(([label, value, amount]) => (
        <Row key={label} $valueWidth={valueWidth}>
          <Track>
            <Bar $color={color} style={{ width: `${(amount / max) * 100}%` }} />
            <Label>{label}</Label>
          </Track>
          <Value>{value}</Value>
        </Row>
      ))}
    </List>
  );
}

function Header({ title, link }) {
  return (
    <PanelHeader>
      <PanelTitle>{title}</PanelTitle>
      {link && (
        <ViewAll href="#">
          View all
          <ChevronRight size={26} />
        </ViewAll>
      )}
    </PanelHeader>
  );
}

function App() {
  return (
    <Page>
      <GlobalStyle />
      <Panel $cut>
        <Card $cut>
          <TrendChart />
        </Card>
      </Panel>
      <Panel>
        <Header title="Chats by country" link />
        <Card>
          <CountryGrid>
            <WorldMap />
            <BarList rows={countries} color="#e9eaf7" valueWidth={61} tall />
          </CountryGrid>
        </Card>
      </Panel>
      <Columns>
        <Panel>
          <Header title="Chats by channel" />
          <Card>
            <BarList rows={channels} color="#fdf0eb" valueWidth={97} />
          </Card>
        </Panel>
        <Panel>
          <Header title="Action calls" link />
          <Card>
            <BarList rows={actions} color="#f5e7f0" valueWidth={87} />
          </Card>
        </Panel>
      </Columns>
      <DockShadow />
      <Corner />
      <ChatButton aria-label="Open chat">
        <svg viewBox="42 48 264 264" fill="none" stroke="#fff" strokeWidth="10" strokeLinecap="round" strokeLinejoin="round">
          <path d="M142 151C152 137 163 130 180 130C206 130 222 148 222 172V208Q222 216 214 216H201" />
          <path d="M125 199a31 31 0 1 1 31 31H131q-6 0-6-6Z" />
        </svg>
      </ChatButton>
    </Page>
  );
}

export default App;
